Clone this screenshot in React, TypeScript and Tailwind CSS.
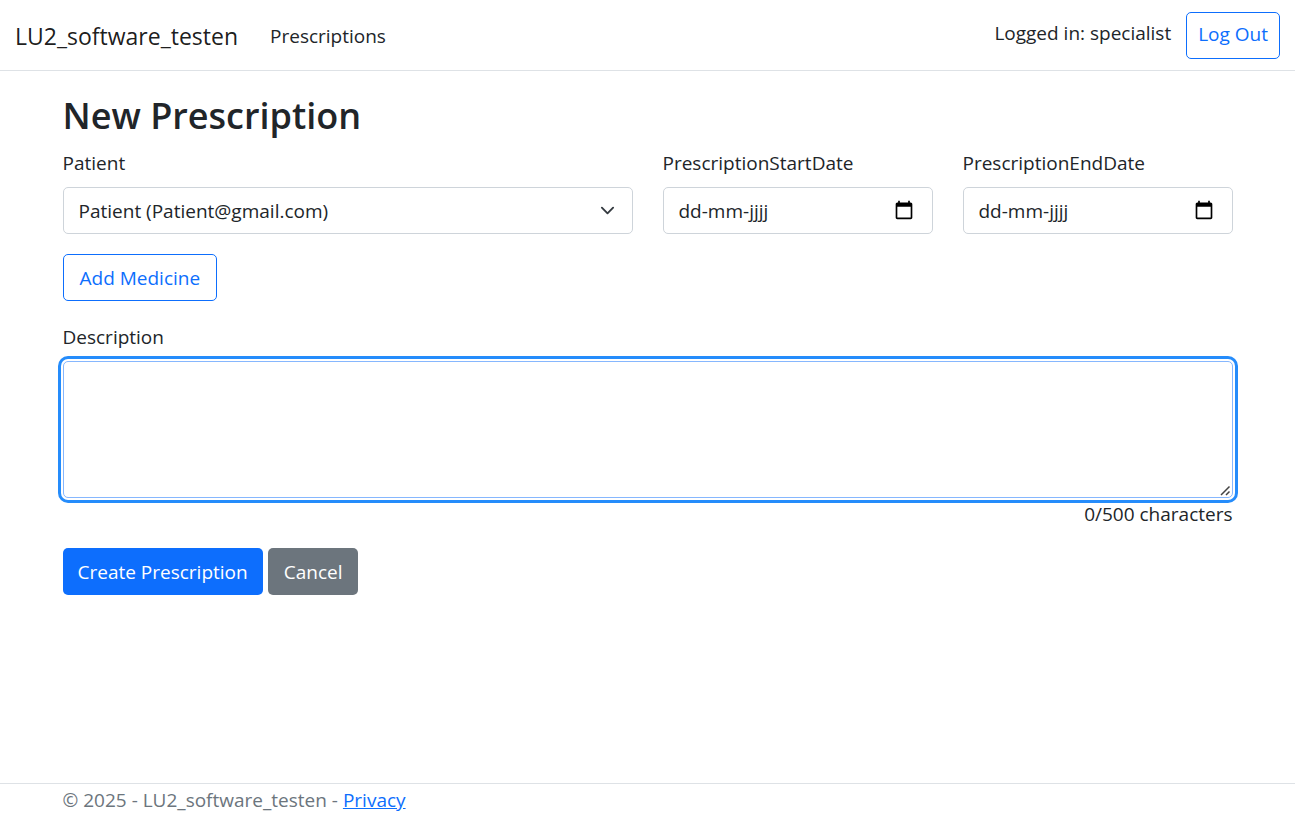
import { useState } from "react";

const control =
  "h-[47px] w-full rounded-[5px] border border-[#ced4da] bg-white px-[15px] text-[#212529] outline-none focus:border-[#86b7fe]";

function CalendarIcon() {
  return (
    <svg viewBox="0 0 24 24" className="size-5" aria-hidden="true">
      <path
        fill="#000"
        d="M20 3h-1V1h-2v2H7V1H5v2H4c-1.100 0-2 .9-2 2v16c0 1.100.9 2 2 2h16c1.100 0 2-.9 2-2V5c0-1.100-.9-2-2-2zm0 18H4V8h16v13z"
      />
    </svg>
  );
}

function DateField({ id, label }: { id: string; label: string }) {
  return (
    <div className="flex flex-col gap-[9px]">
      <label htmlFor={id}>{label}</label>
      <div className="relative">
        <input id={id} type="text" placeholder="dd-mm-jjjj" className={`${control} placeholder:text-[#212529] placeholder:opacity-100`} />
        <button type="button" aria-label={`${label} kalender`} className="absolute top-[13px] right-[19px]">
          <CalendarIcon />
        </button>
      </div>
    </div>
  );
}

export default function App() {
  const [description, setDescription] = useState("");

  return (
    <div className="flex min-h-screen flex-col bg-white font-['Open_Sans','Noto_Sans',sans-serif] text-[19px] leading-[30px] text-[#212529]">
      <header className="border-b border-[#dee2e6]">
        <nav className="flex h-[70px] items-center px-[15px]">
          <div className="flex items-center gap-8 pt-[2px]">
            <a href="#home" className="text-[23px] text-black/90">LU2_software_testen</a>
            <a href="#prescriptions">Prescriptions</a>
          </div>
          <div className="ml-auto flex items-start gap-[15px]">
            <span className="pt-[6px]">Logged in: specialist</span>
            <button type="button" className="h-[47px] rounded-[5px] border border-[#0d6efd] px-[11px] pb-[2px] text-[#0d6efd]">
              Log Out
            </button>
          </div>
        </nav>
      </header>

      <main className="mx-auto w-full max-w-[1200px] flex-1 px-[15px] pt-5">
        <h1 className="text-[36px] leading-[50px] font-semibold">New Prescription</h1>
        <form onSubmit={(e) => e.preventDefault()} className="pt-[7px]">
          <div className="grid grid-cols-4 gap-[30px]">
            <div className="col-span-2 flex flex-col gap-[9px]">
              <label htmlFor="patient">Patient</label>
              <div className="relative">
                <select id="patient" className={`${control} appearance-none pr-[45px]`}>
                  <option>Patient (Patient@gmail.com)</option>
                </select>
                <svg viewBox="0 0 16 16" className="pointer-events-none absolute inset-y-0 right-[18px] my-auto size-[15px]" aria-hidden="true">
                  <path d="m2 5 6 6 6-6" fill="none" stroke="#343a40" strokeWidth="2" strokeLinecap="round" strokeLinejoin="round" />
                </svg>
              </div>
            </div>
            <DateField id="start" label="PrescriptionStartDate" />
            <DateField id="end" label="PrescriptionEndDate" />
          </div>

          <button type="button" className="mt-5 h-[47px] rounded-[5px] border border-[#0d6efd] px-4 text-[#0d6efd]">
            Add Medicine
          </button>

          <div className="mt-[21px] flex flex-col">
            <label htmlFor="description">Description</label>
            <div className="relative mt-[9px] flex">
              <textarea
                id="description"
                maxLength={500}
                value={description}
                onChange={(e) => setDescription(e.target.value)}
                className="h-[137px] w-full rounded-[5px] border border-[#86b7fe] bg-white px-[15px] py-[7px] shadow-[0_0_0_2px_white,0_0_0_5px_#258cfb] outline-none"
              />
              <svg viewBox="0 0 12 12" className="pointer-events-none absolute right-[2px] bottom-[2px] size-3 bg-white" aria-hidden="true">
                <path d="M2 11 10.500 2.500M7 11 10.500 7.500" fill="none" stroke="#444" strokeWidth="1.500" />
              </svg>
            </div>
            <div className="pt-px text-right">{description.length}/500 characters</div>
          </div>

          <div className="mt-[19px] flex gap-[5px]">
            <button type="submit" className="h-[47px] rounded-[5px] bg-[#0d6efd] px-[15px] text-white">
              Create Prescription
            </button>
            <button type="button" className="h-[47px] rounded-[5px] bg-[#6c757d] px-4 text-white">
              Cancel
            </button>
          </div>
        </form>
      </main>

      <footer className="h-[31px] border-t border-[#dee2e6] text-[#6c757d]">
        <div className="mx-auto w-full max-w-[1200px] px-[15px] leading-[32px]">
          © 2025 - LU2_software_testen -{" "}
          <a href="#privacy" className="text-[#0d6efd] underline">Privacy</a>
        </div>
      </footer>
    </div>
  );
}
